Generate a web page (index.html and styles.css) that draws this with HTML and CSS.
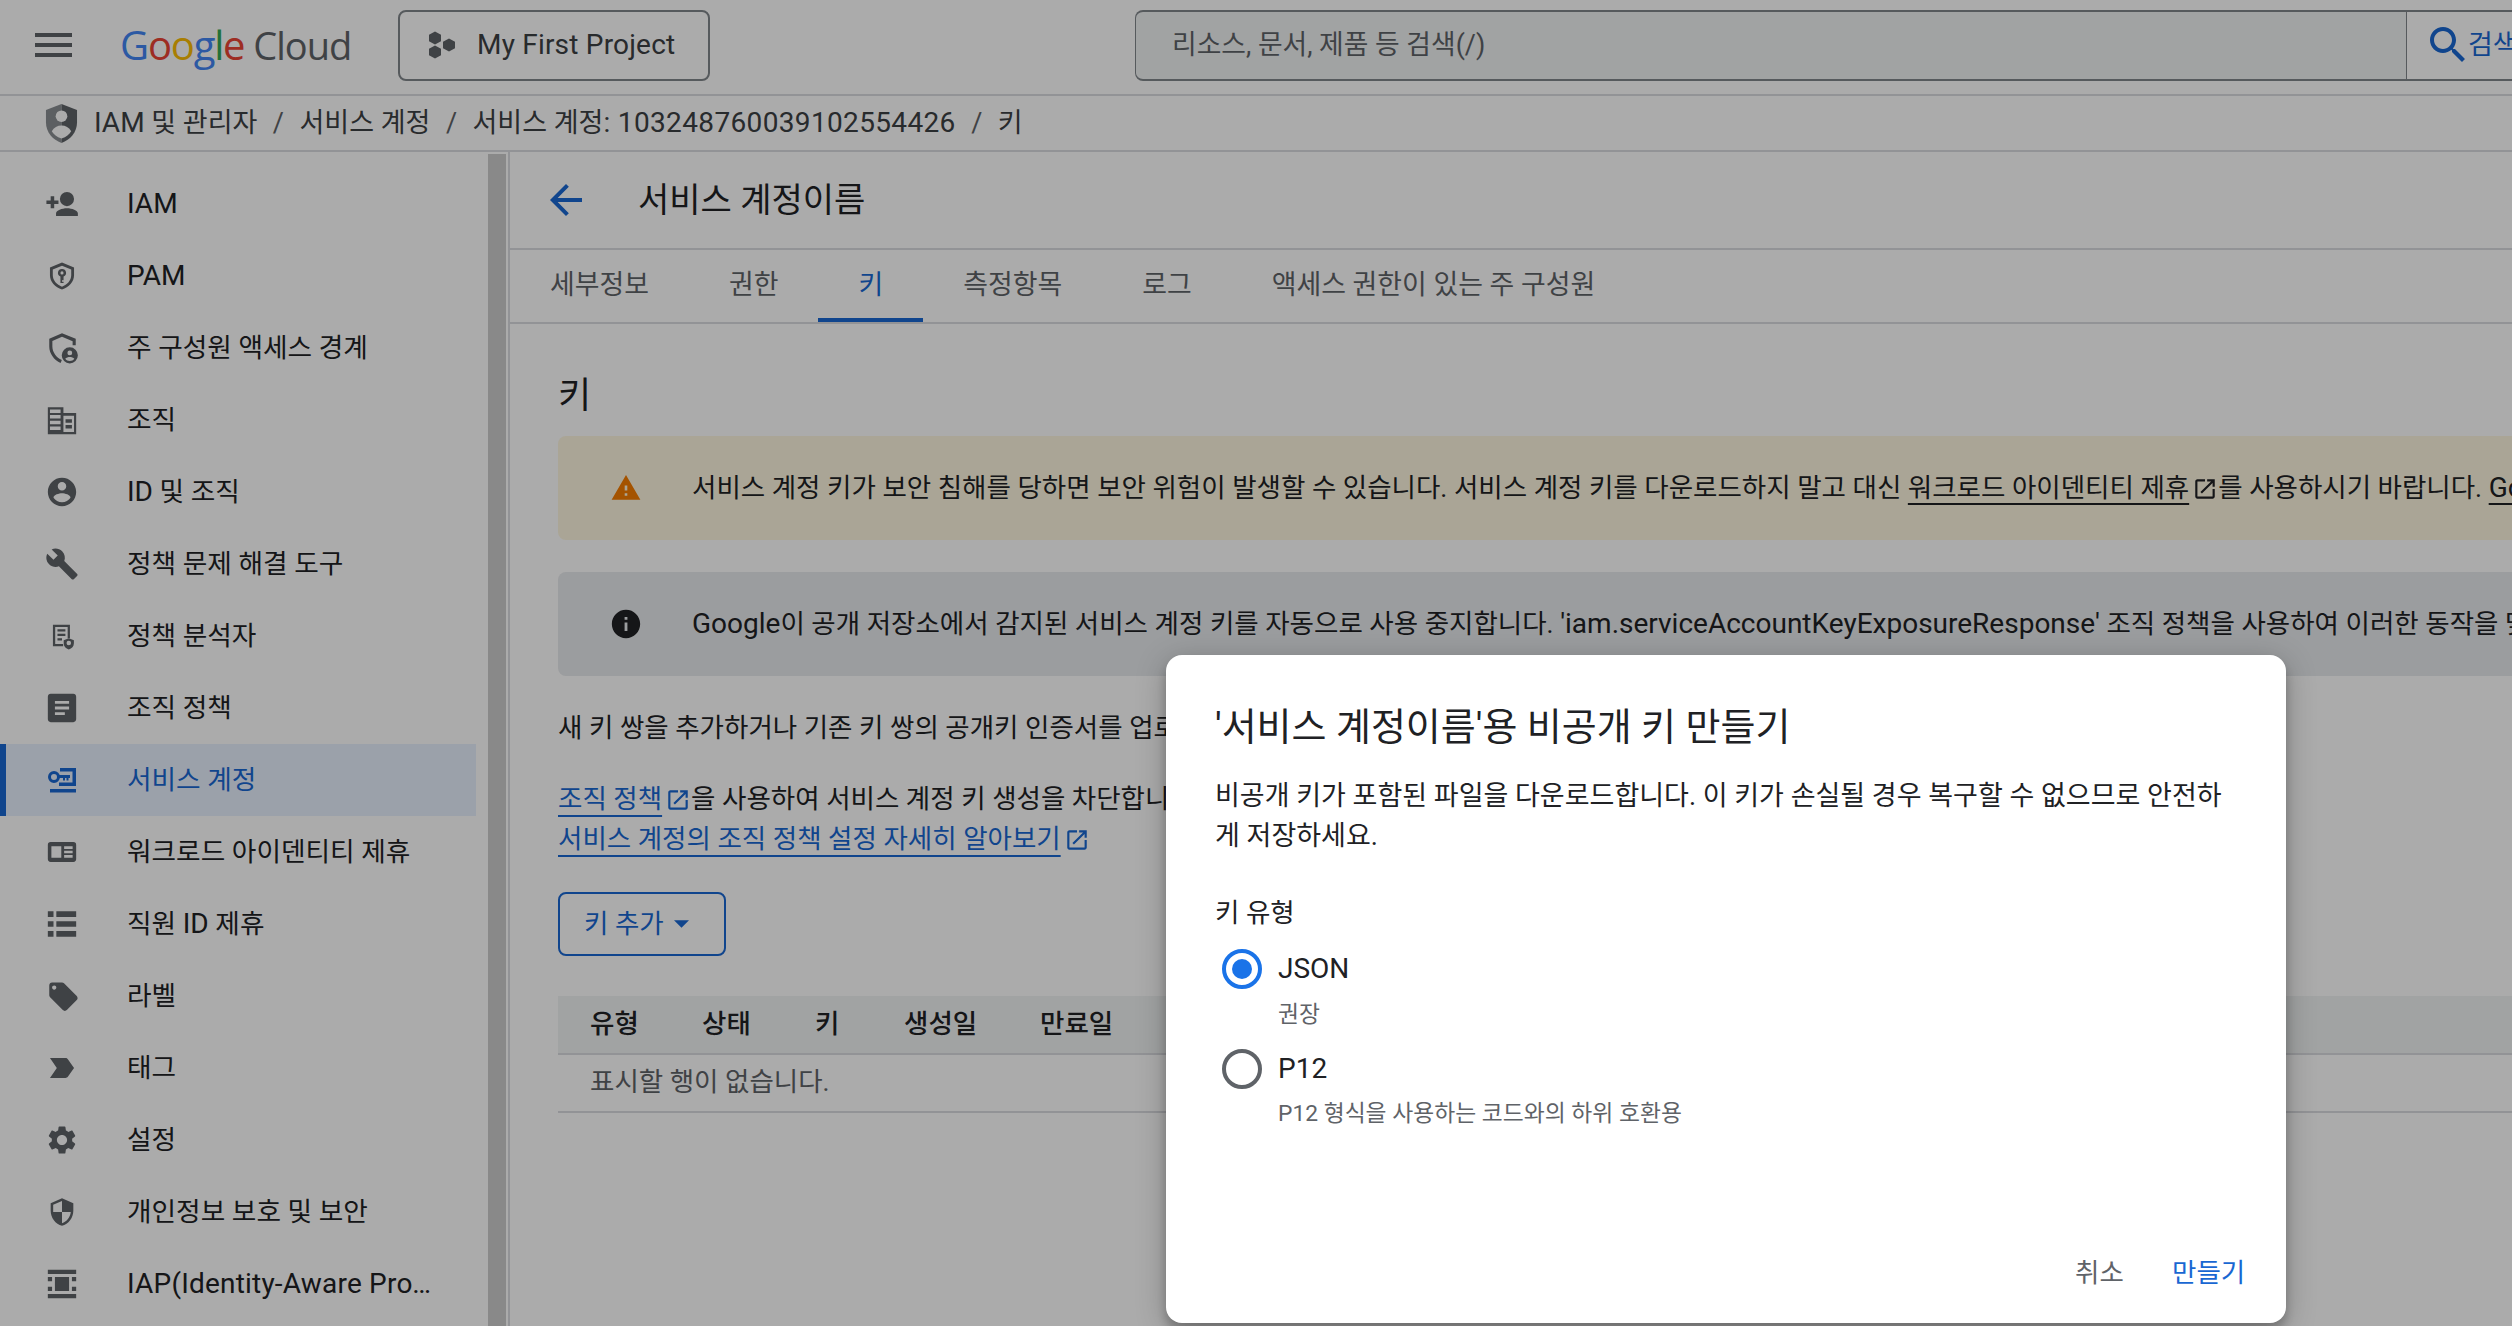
FILE: index.html
```html
<!DOCTYPE html>
<html lang="ko">
<head>
<meta charset="utf-8">
<title>서비스 계정 키</title>
<link rel="stylesheet" href="styles.css">
</head>
<body>
<svg class="defs" width="0" height="0" aria-hidden="true">
<symbol id="i-ext" viewBox="0 0 24 24"><path d="M19 19H5V5h7V3H5c-1.11 0-2 .9-2 2v14c0 1.1.89 2 2 2h14c1.1 0 2-.9 2-2v-7h-2v7zM14 3v2h3.59l-9.83 9.83 1.41 1.41L19 6.41V10h2V3h-7z"/></symbol>
</svg>
<div class="page">
  <header class="topbar">
    <button class="hamburger" aria-label="menu"><span></span><span></span><span></span></button>
    <div class="logo"><span class="logo-google"><span class="g-b">G</span><span class="g-r">o</span><span class="g-y">o</span><span class="g-b">g</span><span class="g-g">l</span><span class="g-r">e</span></span><span class="logo-cloud">Cloud</span></div>
    <button class="project">
      <svg class="project-icon" viewBox="0 0 28 28"><path d="M7 .5l6 3.250v6.500L7 13.500l-6-3.250v-6.500zM7 14.500l6 3.250v6.500L7 27.500l-6-3.250v-6.500zM21 7.500l6 3.250v6.500l-6 3.250-6-3.250v-6.500z"/></svg>
      <span>My First Project</span>
    </button>
    <div class="search">
      <div class="search-field">리소스, 문서, 제품 등 검색(/)</div>
      <div class="search-btn">
        <svg class="search-icon" viewBox="0 0 24 24"><path d="M15.500 14h-.79l-.28-.27C15.410 12.590 16 11.110 16 9.500 16 5.910 13.090 3 9.500 3S3 5.910 3 9.500 5.910 16 9.500 16c1.610 0 3.090-.59 4.230-1.570l.27.28v.79l5 4.990L20.490 19l-4.990-5zm-6 0C7.010 14 5 11.990 5 9.500S7.010 5 9.500 5 14 7.010 14 9.500 11.990 14 9.500 14z"/></svg>
        <span>검색</span>
      </div>
    </div>
  </header>

  <nav class="breadcrumb">
    <svg class="crumb-shield" viewBox="0 0 34 40"><path class="sh-l" d="M17 0L1 6v13c0 10 7 18 16 21z"/><path class="sh-r" d="M17 0l16 6v13c0 10-7 18-16 21z"/><circle class="sh-c" cx="17" cy="12.500" r="6"/><path class="sh-c" d="M7 28c2-4 6-6 10-6s8 2 10 6c-2 3-5 6-10 7.500-5-1.500-8-4.500-10-7.500z"/></svg>
    <span><span class="l">IAM</span> 및 관리자</span><span class="sep">/</span><span>서비스 계정</span><span class="sep">/</span><span>서비스 계정<span class="num">: 103248760039102554426</span></span><span class="sep">/</span><span>키</span>
  </nav>

  <div class="body">
    <aside class="sidebar">
      <ul class="nav">
        <li class="nav-item"><svg class="nav-icon" viewBox="0 0 24 24"><path d="M15.500 3.500a5 5 0 1 0 0 10 5 5 0 0 0 0-10zM15.500 15c-3.500 0-7.700 1.500-7.700 3.500v2h15.400v-2c0-2-4.200-3.500-7.700-3.500zM4 6.500h2.500v3h3v2.500h-3v3H4v-3H1V9.500h3z"/></svg><span class="l">IAM</span></li>
        <li class="nav-item"><svg class="nav-icon" viewBox="0 0 24 24"><path fill-rule="evenodd" d="M12 2.500L3.500 6v5.500c0 4.500 3.600 8.700 8.500 10 4.900-1.300 8.500-5.500 8.500-10V6L12 2.500zm0 2.200l6.500 2.700v4.100c0 3.500-2.800 6.900-6.500 8-3.700-1.100-6.500-4.500-6.500-8V7.400L12 4.700zM12 7a2.800 2.800 0 0 0-1.100 5.400V17h2.200v-1h-1.100v-1h1.100v-2.600A2.800 2.800 0 0 0 12 7zm0 1.700a1.100 1.100 0 1 1 0 2.200 1.100 1.100 0 0 1 0-2.200z"/></svg><span class="l">PAM</span></li>
        <li class="nav-item"><svg class="nav-icon" viewBox="0 0 24 24"><path d="M12 1.500L3 5.500V11c0 5 3.500 9.700 8 11.500l.9-2C8 18.800 5.200 15 5.200 11V7L12 4l7.500 3.300V10h2.200V5.500L12 1.500z"/><path fill-rule="evenodd" d="M17.500 11.500a5.700 5.700 0 1 0 0 11.400 5.700 5.700 0 0 0 0-11.400zm0 2.300a1.700 1.700 0 1 1 0 3.400 1.700 1.700 0 0 1 0-3.400zm0 7.400c-1.300 0-2.500-.6-3.200-1.600.5-.9 2.200-1.300 3.200-1.300s2.700.4 3.200 1.300c-.7 1-1.900 1.600-3.200 1.600z"/></svg><span>주 구성원 액세스 경계</span></li>
        <li class="nav-item"><svg class="nav-icon" viewBox="0 0 24 24"><path fill-rule="evenodd" d="M2 3h11v4h9v15H2V3zm1.500 1.500V7H11V4.500H3.500zm0 4V11H11V8.500H3.500zm0 4V15H11v-2.500H3.500zm0 4V19H11v-2.500H3.500zM13 9v11.500h7.500V9H13zm1.500 2.500h4.500V14h-4.500v-2.500zm0 4h4.500V18h-4.500v-2.500z"/></svg><span>조직</span></li>
        <li class="nav-item"><svg class="nav-icon" viewBox="0 0 24 24"><path d="M12 2C6.480 2 2 6.480 2 12s4.480 10 10 10 10-4.480 10-10S17.520 2 12 2zm0 3c1.660 0 3 1.340 3 3s-1.340 3-3 3-3-1.340-3-3 1.340-3 3-3zm0 14.200c-2.500 0-4.710-1.280-6-3.220.03-1.990 4-3.080 6-3.080 1.990 0 5.970 1.090 6 3.080-1.290 1.940-3.500 3.220-6 3.220z"/></svg><span><span class="l">ID</span> 및 조직</span></li>
        <li class="nav-item"><svg class="nav-icon" viewBox="0 0 24 24"><path d="M22.700 19l-9.100-9.100c.9-2.300.4-5-1.500-6.900-2-2-5-2.400-7.400-1.300L9 6 6 9 1.600 4.700C.4 7.100.9 10.100 2.900 12.100c1.900 1.900 4.600 2.400 6.900 1.500l9.100 9.100c.4.4 1 .4 1.400 0l2.300-2.300c.5-.4.5-1.100.1-1.400z"/></svg><span>정책 문제 해결 도구</span></li>
        <li class="nav-item"><svg class="nav-icon" viewBox="-3 -3 30 30"><path fill-rule="evenodd" d="M4 2h15v12h-2V4H6v15h7v2H4V2zm4 4h7v2H8V6zm0 4h7v2H8v-2zm0 4h4v2H8v-2z"/><path fill-rule="evenodd" d="M18 14l4.500 1.800v2.700c0 2.700-1.900 4.800-4.500 5.500-2.600-.7-4.500-2.800-4.500-5.500v-2.700L18 14zm0 2.200a2 2 0 1 0 0 4 2 2 0 0 0 0-4z"/></svg><span>정책 분석자</span></li>
        <li class="nav-item"><svg class="nav-icon" viewBox="0 0 24 24"><path d="M20 2H4c-1.100 0-2 .9-2 2v16c0 1.100.9 2 2 2h16c1.100 0 2-.9 2-2V4c0-1.100-.9-2-2-2zm-6 15H7v-2h7v2zm3-4H7v-2h10v2zm0-4H7V7h10v2z"/></svg><span>조직 정책</span></li>
        <li class="nav-item active"><svg class="nav-icon" viewBox="0 0 34 34"><path fill-rule="evenodd" d="M9 8a6 6 0 1 0 0 12 6 6 0 0 0 0-12zm0 3a3 3 0 1 1 0 6 3 3 0 0 1 0-6z"/><path d="M15 5h16v18H14v-3.500h13.500V8.500H15zM14 12h11v3h-1.500v2.500h-2V15h-1.500v2.500h-2V15H14zM5 26h26v3.500H5z"/></svg><span>서비스 계정</span></li>
        <li class="nav-item"><svg class="nav-icon" viewBox="0 0 24 24"><path fill-rule="evenodd" d="M4 5h16a2 2 0 0 1 2 2v10a2 2 0 0 1-2 2H4a2 2 0 0 1-2-2V7a2 2 0 0 1 2-2zm.5 3v8h7V8h-7zm9 0v1.800h6V8h-6zm0 3.100v1.800h6v-1.800h-6zm0 3.100V16h6v-1.800h-6z"/></svg><span>워크로드 아이덴티티 제휴</span></li>
        <li class="nav-item"><svg class="nav-icon" viewBox="0 0 24 24"><path d="M2 3h4v4H2zM8 3h14v4H8zM2 10h4v4H2zM8 10h14v4H8zM2 17h4v4H2zM8 17h14v4H8z"/></svg><span>직원 <span class="l">ID</span> 제휴</span></li>
        <li class="nav-item"><svg class="nav-icon" viewBox="0 0 24 24"><path d="M21.410 11.580l-9-9C12.050 2.220 11.550 2 11 2H4c-1.100 0-2 .9-2 2v7c0 .55.22 1.050.59 1.420l9 9c.36.36.86.58 1.410.58.55 0 1.050-.22 1.410-.59l7-7c.37-.36.59-.86.59-1.410 0-.55-.23-1.060-.59-1.420zM5.500 7C4.670 7 4 6.330 4 5.500S4.670 4 5.500 4 7 4.670 7 5.500 6.330 7 5.500 7z" transform="translate(1 .5)"/></svg><span>라벨</span></li>
        <li class="nav-item"><svg class="nav-icon" viewBox="0 0 24 24"><path d="M3.500 18.990l11 .01c.67 0 1.270-.33 1.630-.84L20.500 12l-4.370-6.160c-.36-.51-.96-.84-1.630-.84l-11 .01L8.340 12 3.500 18.990z"/></svg><span>태그</span></li>
        <li class="nav-item"><svg class="nav-icon" viewBox="0 0 24 24"><path d="M19.140 12.940c.04-.3.06-.61.06-.94 0-.32-.02-.64-.07-.94l2.030-1.580c.18-.14.23-.41.12-.61l-1.920-3.320c-.12-.22-.37-.29-.59-.22l-2.390.96c-.5-.38-1.030-.7-1.620-.94l-.36-2.540c-.04-.24-.24-.41-.48-.41h-3.840c-.24 0-.43.17-.47.41l-.36 2.540c-.59.24-1.130.57-1.620.94l-2.390-.96c-.22-.08-.47 0-.59.22L2.740 8.870c-.12.21-.08.47.12.61l2.030 1.580c-.05.3-.09.63-.09.94s.02.64.07.94l-2.030 1.580c-.18.14-.23.41-.12.61l1.920 3.320c.12.22.37.29.59.22l2.390-.96c.5.38 1.030.7 1.620.94l.36 2.540c.05.24.24.41.48.41h3.840c.24 0 .44-.17.47-.41l.36-2.540c.59-.24 1.130-.56 1.620-.94l2.390.96c.22.08.47 0 .59-.22l1.920-3.320c.12-.22.07-.47-.12-.61l-2.010-1.580zM12 15.600c-1.980 0-3.600-1.620-3.600-3.600s1.620-3.600 3.600-3.600 3.600 1.620 3.600 3.600-1.620 3.600-3.600 3.600z"/></svg><span>설정</span></li>
        <li class="nav-item"><svg class="nav-icon" viewBox="-1.500 -1.500 27 27"><path d="M12 1L3 5v6c0 5.550 3.840 10.740 9 12 5.160-1.260 9-6.450 9-12V5l-9-4zm0 10.990h7c-.53 4.120-3.280 7.790-7 8.940V12H5V6.300l7-3.110v8.800z"/></svg><span>개인정보 보호 및 보안</span></li>
        <li class="nav-item"><svg class="nav-icon" viewBox="0 0 24 24"><path d="M2 2h20v3H2zM2 19h20v3H2zM2 7h3v3H2zM2 14h3v3H2zM19 7h3v3h-3zM19 14h3v3h-3zM7 7h10v10H7z"/></svg><span class="l truncate">IAP(Identity-Aware Proxy)</span></li>
      </ul>
      <div class="scrollbar"><div class="thumb"></div></div>
    </aside>

    <main class="content">
      <div class="titlebar">
        <svg class="back" viewBox="0 0 24 24"><path d="M20 11H7.830l5.590-5.590L12 4l-8 8 8 8 1.410-1.410L7.830 13H20v-2z"/></svg>
        <h1>서비스 계정이름</h1>
      </div>
      <div class="tabs">
        <div class="tab">세부정보</div>
        <div class="tab">권한</div>
        <div class="tab on">키</div>
        <div class="tab">측정항목</div>
        <div class="tab">로그</div>
        <div class="tab">액세스 권한이 있는 주 구성원</div>
      </div>
      <section class="panel">
        <h2>키</h2>
        <div class="alert warn">
          <svg class="alert-icon" viewBox="-1 -1 26 26"><path d="M1 21h22L12 2 1 21zm12-3h-2v-2h2v2zm0-4h-2v-4h2v4z"/></svg>
          <p>서비스 계정 키가 보안 침해를 당하면 보안 위험이 발생할 수 있습니다. 서비스 계정 키를 다운로드하지 말고 대신 <a>워크로드 아이덴티티 제휴</a><svg class="ext" viewBox="0 0 24 24"><use href="#i-ext"/></svg>를 사용하시기 바랍니다. <a><span class="l">Google Cloud</span>에서 서비스 계정을 인증하는 방법 자세히 알아보기</a></p>
        </div>
        <div class="alert info">
          <svg class="alert-icon" viewBox="0 0 24 24"><path d="M12 2C6.480 2 2 6.480 2 12s4.480 10 10 10 10-4.480 10-10S17.520 2 12 2zm1 15h-2v-6h2v6zm0-8h-2V7h2v2z"/></svg>
          <p><span class="l">Google</span>이 공개 저장소에서 감지된 서비스 계정 키를 자동으로 사용 중지합니다. <span class="l">'iam.serviceAccountKeyExposureResponse'</span> 조직 정책을 사용하여 이러한 동작을 맞춤설정할 수 있습니다.</p>
        </div>
        <p class="line first">새 키 쌍을 추가하거나 기존 키 쌍의 공개키 인증서를 업로드하세요.</p>
        <p class="line second"><a class="blue">조직 정책</a><svg class="ext blue-ic" viewBox="0 0 24 24"><use href="#i-ext"/></svg>을 사용하여 서비스 계정 키 생성을 차단합니다.</p>
        <p class="line"><a class="blue">서비스 계정의 조직 정책 설정 자세히 알아보기</a><svg class="ext blue-ic" viewBox="0 0 24 24"><use href="#i-ext"/></svg></p>
        <button class="add-key">키 추가<svg class="caret" viewBox="0 0 10 5"><path d="M0 0h10L5 5z"/></svg></button>
        <div class="table">
          <div class="thead"><span class="c1">유형</span><span class="c2">상태</span><span class="c3">키</span><span class="c4">생성일</span><span class="c5">만료일</span></div>
          <div class="tempty">표시할 행이 없습니다.</div>
        </div>
      </section>
    </main>
  </div>
</div>

<div class="scrim"></div>
<div class="dialog" role="dialog">
  <h3>'서비스 계정이름'용 비공개 키 만들기</h3>
  <p class="desc">비공개 키가 포함된 파일을 다운로드합니다. 이 키가 손실될 경우 복구할 수 없으므로 안전하게 저장하세요.</p>
  <div class="key-label">키 유형</div>
  <div class="radio-row"><span class="radio on"></span><div class="radio-main">JSON</div></div>
  <div class="radio-sub">권장</div>
  <div class="radio-row second-radio"><span class="radio"></span><div class="radio-main">P12</div></div>
  <div class="radio-sub">P12 형식을 사용하는 코드와의 하위 호환용</div>
  <div class="actions"><span class="cancel">취소</span><span class="create">만들기</span></div>
</div>
</body>
</html>
```
FILE: styles.css
```css
* { box-sizing: border-box; }
html, body { margin: 0; padding: 0; width: 2512px; height: 1326px; overflow: hidden; background: #fff; }
body { font-family: Roboto, "Noto Sans CJK KR", sans-serif; color: #202124; font-size: 27px; line-height: 40px; position: relative; }
.defs { position: absolute; }
p, h1, h2, h3, ul { margin: 0; padding: 0; font-weight: 400; }
ul { list-style: none; }
button { font: inherit; background: none; }
svg { fill: currentColor; flex: none; }
.l { font-size: 28px; }

.page { width: 2512px; height: 1326px; display: flex; flex-direction: column; overflow: hidden; }

/* top bar */
.topbar { height: 96px; flex: none; display: flex; align-items: center; padding: 0 0 4px 35px; border-bottom: 2px solid #dadce0; }
.hamburger { flex: none; width: 37px; height: 24px; padding: 0; border: 0; display: flex; flex-direction: column; justify-content: space-between; margin-right: 48px; }
.hamburger span { display: block; height: 4px; background: #5f6368; }
.logo { flex: none; width: 278px; display: flex; align-items: baseline; font-family: "Open Sans", sans-serif; line-height: 1; }
.logo-google { margin-right: 9px; font-size: 40px; letter-spacing: -1.2px; }
.g-b { color: #4285f4; } .g-r { color: #ea4335; } .g-y { color: #fbbc04; } .g-g { color: #34a853; }
.logo-cloud { color: #5f6368; font-size: 38px; letter-spacing: -1px; }
.project { flex: none; width: 312px; height: 71px; display: flex; align-items: center; gap: 21px; padding: 0 0 0 28px; border: 2px solid #80868b; border-radius: 8px; color: #3c4043; font-size: 28px; letter-spacing: .2px; margin-right: 425px; }
.project-icon { width: 28px; height: 28px; color: #5f6368; }
.search { flex: none; width: 1377px; height: 71px; display: flex; }
.search-field { flex: none; width: 1271px; height: 71px; background: #f1f3f4; border: 2px solid #80868b; border-left-width: 1px; border-right: 0; border-radius: 8px 0 0 8px; padding-left: 36px; line-height: 66px; font-size: 26.8px; color: #5f6368; }
.search-btn { flex: 1; display: flex; align-items: center; padding-left: 17px; color: #1967d2; border-left: 1px solid #80868b; border-top: 2px solid #80868b; border-bottom: 2px solid #80868b; font-size: 27px; white-space: nowrap; overflow: hidden; }
.search-icon { width: 48px; height: 48px; margin-right: -4px; }

/* breadcrumb */
.breadcrumb { height: 56px; flex: none; display: flex; align-items: center; padding-left: 45px; border-bottom: 2px solid #dadce0; color: #3c4043; font-size: 27px; white-space: nowrap; }
.crumb-shield { width: 33px; height: 39px; margin-right: 16px; }
.sh-l { fill: #8a8e92; } .sh-r { fill: #5f6368; } .sh-c { fill: #fff; }
.num { font-size: 28px; letter-spacing: .35px; }
.sep { margin: 0 15.5px; color: #5f6368; }

/* layout */
.body { flex: 1; display: flex; min-height: 0; }
.sidebar { width: 510px; flex: none; position: relative; display: flex; border-right: 2px solid #dadce0; padding-top: 16px; }
.nav { width: 476px; flex: none; }
.nav-item { height: 72px; display: flex; align-items: center; padding-left: 45px; font-size: 26.7px; white-space: nowrap; }
.nav-icon { width: 34px; height: 34px; margin-right: 48px; color: #5f6368; }
.nav-item.active { background: #e8f0fe; color: #1967d2; box-shadow: inset 6px 0 0 #1967d2; }
.nav-item.active .nav-icon { color: #1967d2; }
.truncate { width: 306px; overflow: hidden; text-overflow: ellipsis; letter-spacing: .2px; }
.scrollbar { margin: -14px 0 0 12px; width: 18px; flex: none; }
.thumb { height: 100%; background: #cdcdcd; }

/* content */
.content { flex: 1; min-width: 0; overflow: hidden; }
.titlebar { height: 98px; display: flex; align-items: center; padding-left: 32px; border-bottom: 2px solid #dadce0; }
.back { width: 48px; height: 48px; color: #1967d2; margin-right: 48px; }
h1 { font-size: 34px; line-height: 44px; }
.tabs { height: 74px; display: flex; border-bottom: 2px solid #dadce0; font-size: 26.9px; color: #5f6368; }
.tab { height: 72px; padding: 0 40px; line-height: 70px; white-space: nowrap; }
.tab.on { color: #1967d2; box-shadow: inset 0 -4px 0 #1967d2; }
.panel { padding: 0 0 0 48px; }
h2 { font-size: 36px; line-height: 48px; padding-top: 48px; height: 112px; }
.alert { height: 104px; border-radius: 8px 0 0 8px; display: flex; align-items: center; padding-left: 51px; white-space: nowrap; font-size: 26.5px; margin-bottom: 32px; }
.alert p { margin-left: 49px; }
.alert a { text-decoration: underline; text-decoration-thickness: 2px; text-underline-offset: 6px; }
.alert-icon { width: 34px; height: 34px; }
.warn { background: #fef7e0; }
.warn .alert-icon { color: #f57c00; }
.info { background: #e8eaed; margin-bottom: 0; }
.ext { width: 26px; height: 26px; margin-left: 3px; vertical-align: -5px; }
.line { font-size: 26.5px; line-height: 40px; white-space: nowrap; }
.line.first { margin-top: 32px; }
.line.second { margin-top: 31px; }
.blue { color: #1967d2; text-decoration: underline; text-decoration-thickness: 2px; text-underline-offset: 7px; }
.blue-ic { color: #1967d2; }
.add-key { margin-top: 33px; width: 168px; height: 64px; border: 2px solid #1967d2; border-radius: 8px; color: #1967d2; font-size: 26.5px; display: flex; align-items: center; padding: 0 0 0 24px; }
.caret { width: 15px; height: 8px; margin-left: 10px; }
.table { margin-top: 40px; }
.thead { height: 59px; background: #f1f3f4; border-bottom: 2px solid #dadce0; font-size: 26.5px; display: flex; align-items: center; padding: 0 0 2px 32px; font-weight: 500; }
.thead span { display: block; }
.c1 { width: 112px; } .c2 { width: 113px; } .c3 { width: 89px; } .c4 { width: 136px; } .c5 { width: 120px; }
.tempty { height: 58px; line-height: 54px; padding-left: 32px; border-bottom: 2px solid #dadce0; color: #5f6368; font-size: 26.5px; }

/* dialog */
.scrim { position: absolute; inset: 0; background: rgba(0,0,0,.33); }
.dialog { position: absolute; left: 1166px; top: 655px; width: 1120px; height: 668px; background: #fff; border-radius: 16px; padding: 50px 40px 0 49px; box-shadow: 0 6px 30px rgba(0,0,0,.25), 0 8px 10px rgba(0,0,0,.2); }
h3 { font-size: 38px; line-height: 44px; }
.desc { margin-top: 27px; font-size: 27px; line-height: 40px; }
.key-label { margin-top: 37px; font-size: 26.5px; line-height: 40px; }
.radio-row { display: flex; align-items: center; margin-top: 16px; padding-left: 7px; height: 40px; }
.second-radio { margin-top: 19px; }
.radio { width: 40px; height: 40px; border-radius: 50%; border: 4px solid #5f6368; position: relative; margin-right: 16px; flex: none; }
.radio.on { border-color: #1a73e8; }
.radio.on::after { content: ""; position: absolute; left: 6px; top: 6px; width: 20px; height: 20px; border-radius: 50%; background: #1a73e8; }
.radio-main { font-size: 28px; }
.radio-sub { margin-top: 11px; margin-left: 63px; font-size: 22.8px; line-height: 30px; color: #5f6368; }
.second-radio + .radio-sub { margin-top: 10px; }
.actions { position: absolute; left: 0; right: 0; bottom: 30px; line-height: 40px; font-size: 26.5px; }
.cancel { position: absolute; left: 909px; bottom: 0; color: #5f6368; }
.create { position: absolute; left: 1006px; bottom: 0; color: #1967d2; }
```
